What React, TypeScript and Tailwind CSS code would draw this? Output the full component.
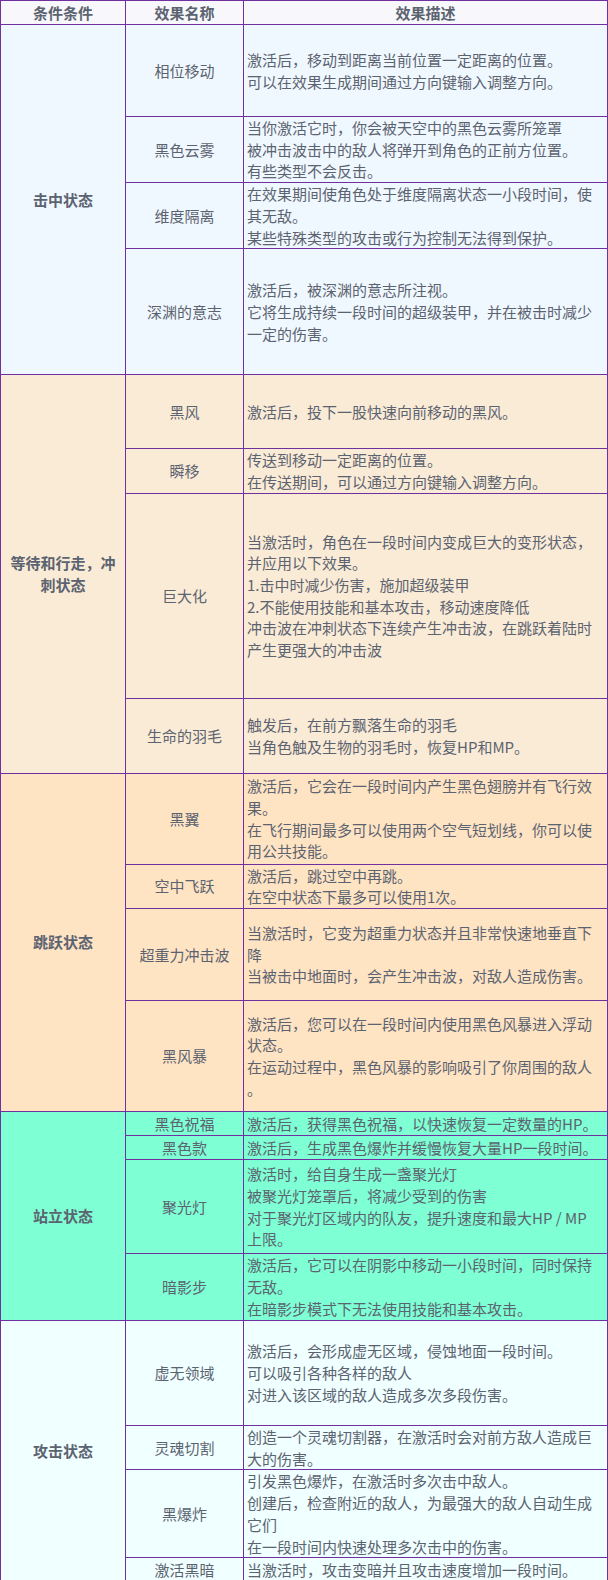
import React from "react";

interface EffectRow {
  name: string;
  h: string;
  lines: string[];
}

interface Section {
  title: string[];
  bg: string;
  rows: EffectRow[];
}

const sections: Section[] = [
  {
    title: ["击中状态"],
    bg: "bg-[#f0f8ff]",
    rows: [
      {
        name: "相位移动",
        h: "h-[92px]",
        lines: ["激活后，移动到距离当前位置一定距离的位置。", "可以在效果生成期间通过方向键输入调整方向。"],
      },
      {
        name: "黑色云雾",
        h: "h-[66px]",
        lines: [
          "当你激活它时，你会被天空中的黑色云雾所笼罩",
          "被冲击波击中的敌人将弹开到角色的正前方位置。",
          "有些类型不会反击。",
        ],
      },
      {
        name: "维度隔离",
        h: "h-[66px]",
        lines: [
          "在效果期间使角色处于维度隔离状态一小段时间，使",
          "其无敌。",
          "某些特殊类型的攻击或行为控制无法得到保护。",
        ],
      },
      {
        name: "深渊的意志",
        h: "h-[126px]",
        lines: [
          "激活后，被深渊的意志所注视。",
          "它将生成持续一段时间的超级装甲，并在被击时减少",
          "一定的伤害。",
        ],
      },
    ],
  },
  {
    title: ["等待和行走，冲", "刺状态"],
    bg: "bg-[#faebd7]",
    rows: [
      { name: "黑风", h: "h-[74px]", lines: ["激活后，投下一股快速向前移动的黑风。"] },
      {
        name: "瞬移",
        h: "h-[44px]",
        lines: ["传送到移动一定距离的位置。", "在传送期间，可以通过方向键输入调整方向。"],
      },
      {
        name: "巨大化",
        h: "h-[205px]",
        lines: [
          "当激活时，角色在一段时间内变成巨大的变形状态，",
          "并应用以下效果。",
          "1.击中时减少伤害，施加超级装甲",
          "2.不能使用技能和基本攻击，移动速度降低",
          "冲击波在冲刺状态下连续产生冲击波，在跳跃着陆时",
          "产生更强大的冲击波",
        ],
      },
      {
        name: "生命的羽毛",
        h: "h-[75px]",
        lines: ["触发后，在前方飘落生命的羽毛", "当角色触及生物的羽毛时，恢复HP和MP。"],
      },
    ],
  },
  {
    title: ["跳跃状态"],
    bg: "bg-[#ffe4c4]",
    rows: [
      {
        name: "黑翼",
        h: "h-[91px]",
        lines: [
          "激活后，它会在一段时间内产生黑色翅膀并有飞行效",
          "果。",
          "在飞行期间最多可以使用两个空气短划线，你可以使",
          "用公共技能。",
        ],
      },
      {
        name: "空中飞跃",
        h: "h-[44px]",
        lines: ["激活后，跳过空中再跳。", "在空中状态下最多可以使用1次。"],
      },
      {
        name: "超重力冲击波",
        h: "h-[92px]",
        lines: [
          "当激活时，它变为超重力状态并且非常快速地垂直下",
          "降",
          "当被击中地面时，会产生冲击波，对敌人造成伤害。",
        ],
      },
      {
        name: "黑风暴",
        h: "h-[111px]",
        lines: [
          "激活后，您可以在一段时间内使用黑色风暴进入浮动",
          "状态。",
          "在运动过程中，黑色风暴的影响吸引了你周围的敌人",
          "。",
        ],
      },
    ],
  },
  {
    title: ["站立状态"],
    bg: "bg-[#7fffd4]",
    rows: [
      { name: "黑色祝福", h: "h-[24px]", lines: ["激活后，获得黑色祝福，以快速恢复一定数量的HP。"] },
      { name: "黑色款", h: "h-[24px]", lines: ["激活后，生成黑色爆炸并缓慢恢复大量HP一段时间。"] },
      {
        name: "聚光灯",
        h: "h-[94px]",
        lines: [
          "激活时，给自身生成一盏聚光灯",
          "被聚光灯笼罩后，将减少受到的伤害",
          "对于聚光灯区域内的队友，提升速度和最大HP / MP",
          "上限。",
        ],
      },
      {
        name: "暗影步",
        h: "h-[67px]",
        lines: [
          "激活后，它可以在阴影中移动一小段时间，同时保持",
          "无敌。",
          "在暗影步模式下无法使用技能和基本攻击。",
        ],
      },
    ],
  },
  {
    title: ["攻击状态"],
    bg: "bg-[#f0ffff]",
    rows: [
      {
        name: "虚无领域",
        h: "h-[105px]",
        lines: ["激活后，会形成虚无区域，侵蚀地面一段时间。", "可以吸引各种各样的敌人", "对进入该区域的敌人造成多次多段伤害。"],
      },
      {
        name: "灵魂切割",
        h: "h-[44px]",
        lines: ["创造一个灵魂切割器，在激活时会对前方敌人造成巨", "大的伤害。"],
      },
      {
        name: "黑爆炸",
        h: "h-[87px]",
        lines: [
          "引发黑色爆炸，在激活时多次击中敌人。",
          "创建后，检查附近的敌人，为最强大的敌人自动生成",
          "它们",
          "在一段时间内快速处理多次击中的伤害。",
        ],
      },
      { name: "激活黑暗", h: "h-[24px]", lines: ["当激活时，攻击变暗并且攻击速度增加一段时间。"] },
    ],
  },
];

const cell = "border border-[#7030a0] p-0 align-middle";

export default function App() {
  return (
    <div className="w-[608px] bg-white font-['Noto_Sans_CJK_SC','Noto_Sans',sans-serif] text-[15px] leading-[21.7px] text-[#5c6370]">
      <table className="w-[608px] table-fixed border-collapse">
        <colgroup>
          <col className="w-[125px]" />
          <col className="w-[118px]" />
          <col />
        </colgroup>
        <thead>
          <tr className="h-[24px] bg-[#f8f8fc]">
            <th className={`${cell} text-center font-bold`}>条件条件</th>
            <th className={`${cell} text-center font-bold`}>效果名称</th>
            <th className={`${cell} text-center font-bold`}>效果描述</th>
          </tr>
        </thead>
        <tbody>
          {sections.map((sec) =>
            sec.rows.map((row, i) => (
              <tr key={sec.title.join("") + row.name} className={row.h}>
                {i === 0 && (
                  <td rowSpan={sec.rows.length} className={`${cell} ${sec.bg} px-1 text-center font-bold`}>
                    {sec.title.map((t) => (
                      <div key={t}>{t}</div>
                    ))}
                  </td>
                )}
                <td className={`${cell} ${sec.bg} text-center`}>{row.name}</td>
                <td className={`${cell} ${sec.bg} pl-[3px] text-left`}>
                  {row.lines.map((l, j) => (
                    <div key={j} className="whitespace-nowrap">
                      {l}
                    </div>
                  ))}
                </td>
              </tr>
            ))
          )}
        </tbody>
      </table>
    </div>
  );
}
